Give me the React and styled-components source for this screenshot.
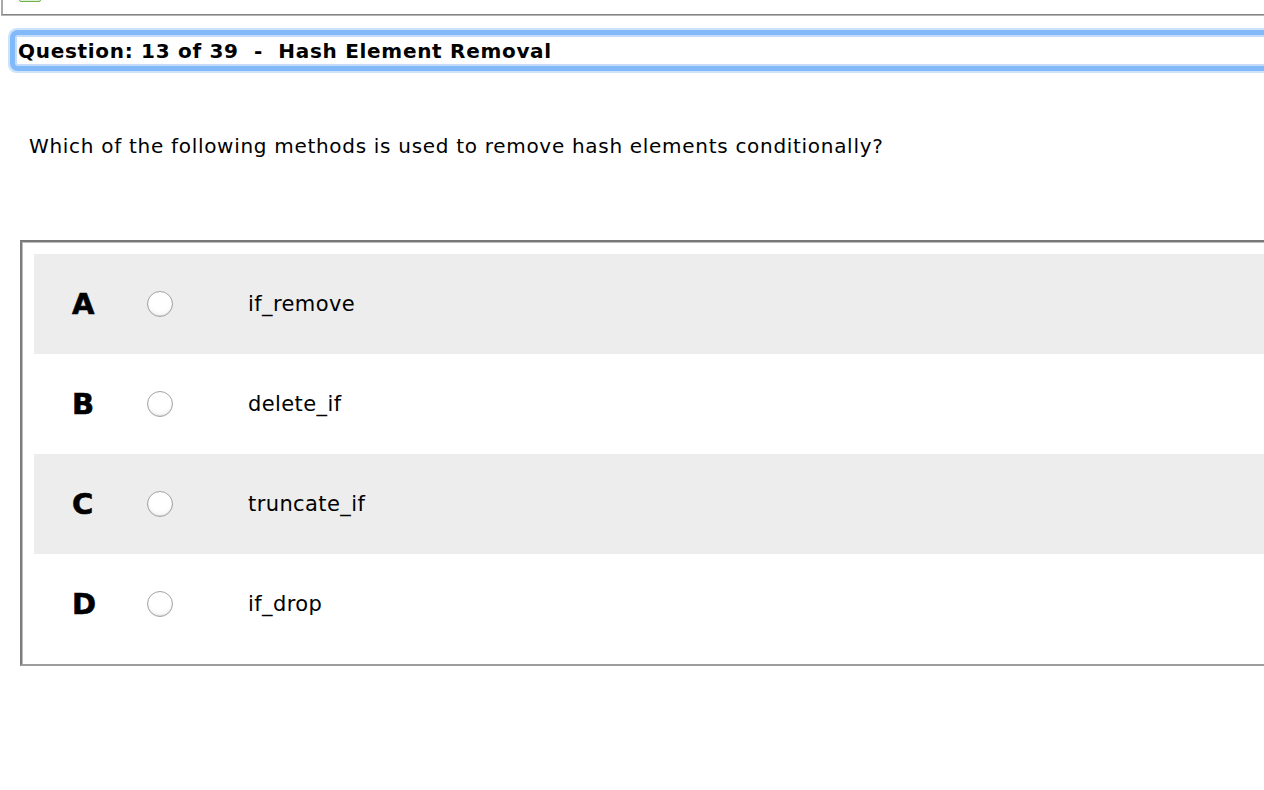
import React from "react";
import styled, { createGlobalStyle } from "styled-components";

const Global = createGlobalStyle`
  html, body { margin: 0; padding: 0; background: #fff; }
  body { width: 1264px; height: 790px; overflow: hidden; font-family: "DejaVu Sans", Verdana, sans-serif; color: #000; }
`;

const Page = styled.div`
  width: 1264px;
  overflow: hidden;
`;

const TopStrip = styled.div`
  height: 14px;
  margin-left: 1px;
  border-left: 2px solid #a9a9a9;
  border-bottom: 1px solid #858585;
  box-shadow: 0 1px 0 #b4b4b4;
  position: relative;
  overflow: hidden;
`;

const Tab = styled.div`
  position: absolute;
  left: 16px;
  top: -12px;
  width: 20px;
  height: 12px;
  border: 1px solid #6fb14d;
  border-radius: 2px;
  background: #dff0d4;
`;

const TitleWrap = styled.div`
  padding: 20px 0 0 15px;
`;

const TitleBox = styled.div`
  width: 1300px;
  height: 26px;
  border: 2px solid #c4dcfa;
  border-radius: 3px;
  box-shadow: 0 0 0 5px #82b9f8, 0 0 0 7px #cde2fb;
  background: #fff;
  display: flex;
  align-items: center;
  padding-left: 1px;
  padding-top: 1px;
  font-family: "DejaVu Sans", Verdana, sans-serif;
  font-weight: bold;
  font-size: 20px;
  letter-spacing: 0.7px;
  white-space: pre;
`;

const QuestionText = styled.p`
  margin: 68px 0 0 29px;
  font-size: 20px;
  letter-spacing: 0.7px;
  line-height: 24px;
  font-family: "DejaVu Sans", Verdana, sans-serif;
`;

const Panel = styled.div`
  margin: 82px 0 0 20px;
  width: 1300px;
  border-top: 2px solid #787878;
  border-left: 2px solid #7d7d7d;
  border-bottom: 2px solid #9d9d9d;
  box-shadow: inset 1px 1px 0 #bdbdbd;
  padding: 12px 0 10px 12px;
`;

const Row = styled.div`
  height: 100px;
  display: flex;
  align-items: center;
  background: ${(p) => (p.$shaded ? "#ededed" : "#fff")};
  padding-left: 38px;
`;

const Letter = styled.div`
  width: 75px;
  font-family: "DejaVu Sans", Verdana, sans-serif;
  font-weight: bold;
  font-size: 29px;
  line-height: 1;
  -webkit-text-stroke: 0.6px #000;
`;

const Radio = styled.span`
  width: 24px;
  height: 24px;
  border-radius: 50%;
  border: 1px solid #a4a4a4;
  background: radial-gradient(circle at 50% 35%, #ffffff 50%, #ececec 100%);
  box-shadow: inset 0 -1px 1px rgba(0,0,0,0.1);
  margin-right: 75px;
  flex: none;
`;

const OptionText = styled.span`
  font-family: "DejaVu Sans", Verdana, sans-serif;
  font-size: 21px;
  letter-spacing: 0.4px;
  line-height: 1;
`;

const options = [
  ["A", "if_remove"],
  ["B", "delete_if"],
  ["C", "truncate_if"],
  ["D", "if_drop"],
];

export default function App() {
  return (
    <Page>
      <Global />
      <TopStrip>
        <Tab />
      </TopStrip>
      <TitleWrap>
        <TitleBox>{"Question: 13 of 39  -  Hash Element Removal"}</TitleBox>
      </TitleWrap>
      <QuestionText>
        Which of the following methods is used to remove hash elements conditionally?
      </QuestionText>
      <Panel>
        {options.map(([l, t], i) => (
          <Row key={l} $shaded={i % 2 === 0}>
            <Letter>{l}</Letter>
            <Radio />
            <OptionText>{t}</OptionText>
          </Row>
        ))}
      </Panel>
    </Page>
  );
}
